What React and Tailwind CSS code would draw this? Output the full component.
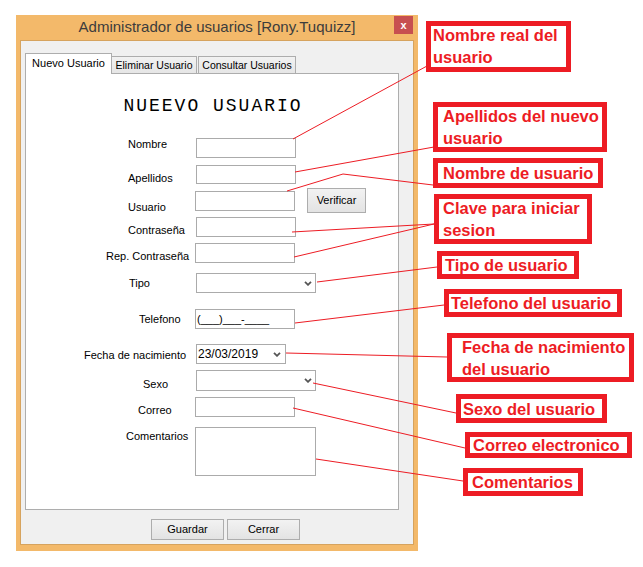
import React from "react";

const sans = "font-['Liberation_Sans',Arial,sans-serif]";

function Chevron() {
  return (
    <svg width="8" height="5" viewBox="0 0 8 5" className="shrink-0">
      <polyline points="1,0.8 4,3.8 7,0.8" fill="none" stroke="#555" strokeWidth="1.8" />
    </svg>
  );
}

function Row({ rowClass, colClass, labelClass, label, children }) {
  return (
    <div className={`flex shrink-0 ${rowClass}`}>
      <div className={`shrink-0 ${colClass}`}>
        <div className={`whitespace-nowrap text-[11px] leading-[13px] text-black ${labelClass}`}>
          {label}
        </div>
      </div>
      {children}
    </div>
  );
}

function Note({ boxClass, textClass, lines }) {
  const two = lines.length > 1;
  return (
    <div
      className={`shrink-0 border-[5px] border-[#ED1C24] bg-white font-['Liberation_Sans',Arial,sans-serif] text-[16.5px] font-bold text-[#ED1C24] ${
        two ? "" : "flex items-center"
      } ${boxClass}`}
    >
      <div className={`whitespace-nowrap leading-[22px] ${two ? "-mt-[2px]" : ""} ${textClass}`}>
        {lines.map((l) => (
          <div key={l}>{l}</div>
        ))}
      </div>
    </div>
  );
}

const lines = [
  "293,139 427,66",
  "295,172 434,147",
  "287,191 343,174 433,185",
  "292,232 434,224",
  "294,257 434,224",
  "317,282 437,267",
  "295,323 444,305",
  "286,353 447,357",
  "313,383 456,413",
  "293,408 465,448",
  "316,459 463,481",
];

export default function App() {
  const box = "shrink-0 border border-[#ABABAB] bg-white";
  const btn =
    "shrink-0 border border-[#ADADAD] bg-gradient-to-b from-[#F2F2F2] to-[#E3E3E3] text-[11px] text-black flex items-center justify-center";

  return (
    <div className={`relative flex h-[567px] w-[643px] overflow-hidden bg-white ${sans}`}>
      {/* window */}
      <div className="ml-[16px] mt-[15px] flex h-[536px] w-[402px] shrink-0 flex-col bg-[#F3B96A]">
        <div className="flex h-[25px] shrink-0 items-start">
          <div className="w-[24px] shrink-0" />
          <div className="flex-1 pt-[2px] text-center text-[15px] leading-[20px] text-[#3C3C3C]">
            Administrador de usuarios [Rony.Tuquizz]
          </div>
          <div className="mr-[5px] mt-[1px] flex h-[18px] w-[19px] items-center justify-center bg-[#C75050] text-[11px] font-bold leading-none text-white">
            x
          </div>
        </div>

        <div className="mx-[4px] flex h-[505px] shrink-0 flex-col border border-[#D6A35E] bg-[#F0F0F0]">
          {/* tabs */}
          <div className="ml-[4px] mt-[12px] flex h-[20px] items-end text-black">
            <div className="relative z-10 -mb-px flex h-[21px] w-[87px] items-start justify-center border border-b-0 border-[#ADADAD] bg-white pt-[3px] text-[11px] leading-[13px]">
              Nuevo Usuario
            </div>
            <div className="flex h-[17px] w-[85px] items-center justify-center border border-b-0 border-l-0 border-[#ADADAD] bg-gradient-to-b from-[#F2F2F2] to-[#E6E6E6] text-[10.5px] leading-[13px]">
              Eliminar Usuario
            </div>
            <div className="ml-[1px] flex h-[17px] w-[98px] items-center justify-center border border-b-0 border-[#ADADAD] bg-gradient-to-b from-[#F2F2F2] to-[#E6E6E6] text-[10.5px] leading-[13px]">
              Consultar Usuarios
            </div>
          </div>

          {/* panel */}
          <div className="ml-[4px] flex h-[437px] w-[374px] shrink-0 flex-col border border-[#ADADAD] bg-white">
            <div className="mt-[23px] h-[18px] shrink-0 pl-[2px] text-center font-['Liberation_Mono',monospace] text-[18px] leading-[18px] tracking-[2px] text-black">
              NUEEVO USUARIO
            </div>

            <Row rowClass="mt-[23px] h-[20px]" colClass="w-[170px]" labelClass="pl-[102px]" label="Nombre">
              <div className={`${box} h-[20px] w-[100px]`} />
            </Row>
            <Row rowClass="mt-[7px] h-[19px]" colClass="w-[170px]" labelClass="pl-[102px] mt-[7px]" label="Apellidos">
              <div className={`${box} h-[19px] w-[100px]`} />
            </Row>
            <Row rowClass="mt-[7px] h-[20px]" colClass="w-[169px]" labelClass="pl-[102px] mt-[10px]" label="Usuario">
              <div className={`${box} h-[20px] w-[100px]`} />
              <div className={`${btn} ml-[12px] -mt-[3px] h-[25px] w-[59px]`}>Verificar</div>
            </Row>
            <Row rowClass="mt-[6px] h-[20px]" colClass="w-[170px]" labelClass="pl-[102px] mt-[7px]" label="Contraseña">
              <div className={`${box} h-[20px] w-[100px]`} />
            </Row>
            <Row rowClass="mt-[6px] h-[20px]" colClass="w-[169px]" labelClass="pl-[80px] mt-[7px]" label="Rep. Contraseña">
              <div className={`${box} h-[20px] w-[100px]`} />
            </Row>
            <Row rowClass="mt-[10px] h-[20px]" colClass="w-[170px]" labelClass="pl-[103px] mt-[4px]" label="Tipo">
              <div className={`${box} flex h-[20px] w-[120px] items-center justify-end pr-[3px]`}>
                <Chevron />
              </div>
            </Row>
            <Row rowClass="mt-[16px] h-[20px]" colClass="w-[169px]" labelClass="pl-[113px] mt-[4px]" label="Telefono">
              <div className={`${box} flex h-[20px] w-[100px] items-center pl-[1px] text-[11px] text-black`}>
                (___)___-____
              </div>
            </Row>
            <Row rowClass="mt-[15px] h-[20px]" colClass="w-[170px]" labelClass="pl-[58px] mt-[5px]" label="Fecha de nacimiento">
              <div className={`${box} flex h-[20px] w-[90px] items-center justify-between pl-[1px] pr-[4px] text-[12px] text-black`}>
                <span>23/03/2019</span>
                <Chevron />
              </div>
            </Row>
            <Row rowClass="mt-[6px] h-[21px]" colClass="w-[170px]" labelClass="pl-[117px] mt-[8px]" label="Sexo">
              <div className={`${box} flex h-[21px] w-[120px] items-center justify-end pr-[3px]`}>
                <Chevron />
              </div>
            </Row>
            <Row rowClass="mt-[6px] h-[20px]" colClass="w-[169px]" labelClass="pl-[112px] mt-[7px]" label="Correo">
              <div className={`${box} h-[20px] w-[100px]`} />
            </Row>
            <Row rowClass="mt-[10px] h-[49px]" colClass="w-[169px]" labelClass="pl-[100px] mt-[3px]" label="Comentarios">
              <div className={`${box} h-[49px] w-[121px]`} />
            </Row>
          </div>

          {/* bottom buttons */}
          <div className="ml-[130px] mt-[9px] flex gap-[3px]">
            <div className={`${btn} h-[21px] w-[73px]`}>Guardar</div>
            <div className={`${btn} h-[21px] w-[73px]`}>Cerrar</div>
          </div>
        </div>
      </div>

      {/* annotations */}
      <div className="flex flex-col items-start">
        <Note boxClass="ml-[8px] mt-[21px] w-[145px] h-[51px]" textClass="pl-[2px]" lines={["Nombre real del", "usuario"]} />
        <Note boxClass="ml-[15px] mt-[30px] w-[174px] h-[50px]" textClass="pl-[5px]" lines={["Apellidos del nuevo", "usuario"]} />
        <Note boxClass="ml-[15px] mt-[6px] w-[170px] h-[30px]" textClass="pl-[5px]" lines={["Nombre de usuario"]} />
        <Note boxClass="ml-[16px] mt-[6px] w-[158px] h-[50px]" textClass="pl-[4px]" lines={["Clave para iniciar", "sesion"]} />
        <Note boxClass="ml-[19px] mt-[7px] w-[142px] h-[28px]" textClass="pl-[3px]" lines={["Tipo de usuario"]} />
        <Note boxClass="ml-[26px] mt-[10px] w-[178px] h-[28px]" textClass="pl-[2px]" lines={["Telefono del usuario"]} />
        <Note boxClass="ml-[29px] mt-[16px] w-[187px] h-[49px]" textClass="pl-[10px]" lines={["Fecha de nacimiento", "del usuario"]} />
        <Note boxClass="ml-[38px] mt-[12px] w-[151px] h-[29px]" textClass="pl-[2px]" lines={["Sexo del usuario"]} />
        <Note boxClass="ml-[47px] mt-[9px] w-[167px] h-[26px]" textClass="pl-[3px]" lines={["Correo electronico"]} />
        <Note boxClass="ml-[45px] mt-[10px] w-[120px] h-[28px]" textClass="pl-[4px]" lines={["Comentarios"]} />
      </div>

      {/* leader lines */}
      <svg className="pointer-events-none absolute left-0 top-0" width="643" height="567" viewBox="0 0 643 567">
        {lines.map((p) => (
          <polyline key={p} points={p} fill="none" stroke="#ED1C24" strokeWidth="1" />
        ))}
      </svg>
    </div>
  );
}
